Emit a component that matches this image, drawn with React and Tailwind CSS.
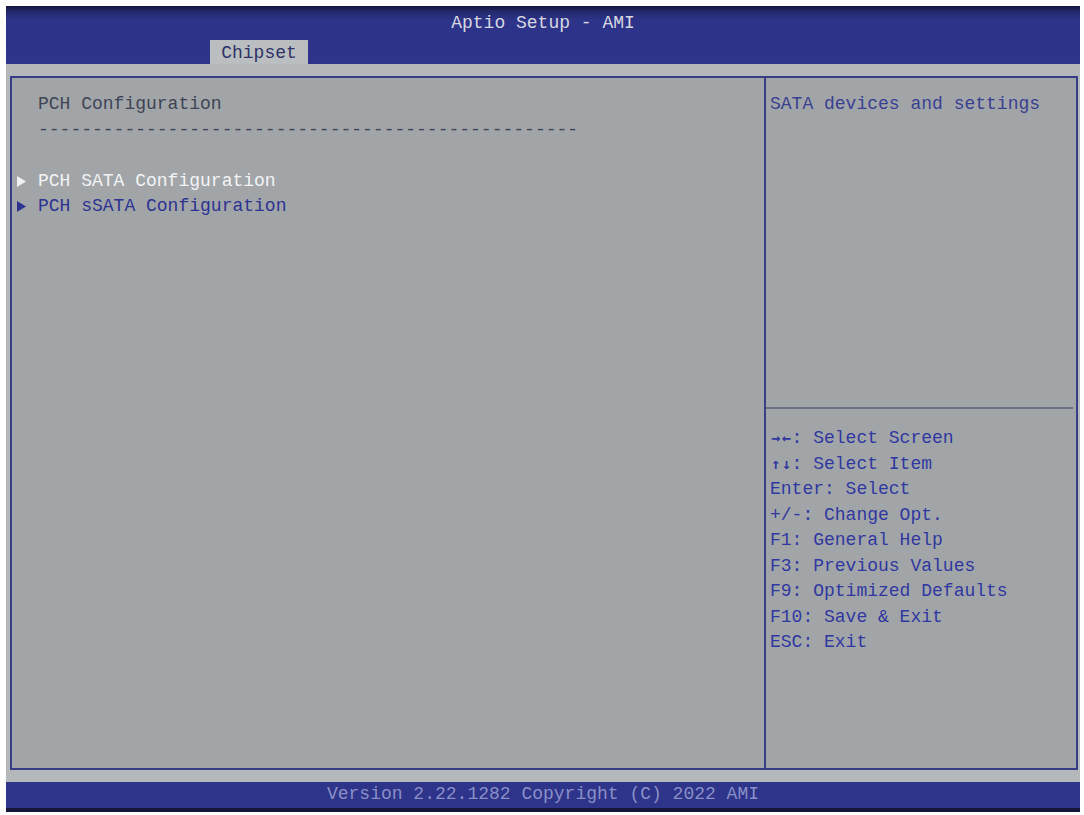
import React from 'react';

const helpLines = [
    [['\u2192', '\u2190'], ': Select Screen'],
    [['\u2191', '\u2193'], ': Select Item'],
    [null, 'Enter: Select'],
    [null, '+/-: Change Opt.'],
    [null, 'F1: General Help'],
    [null, 'F3: Previous Values'],
    [null, 'F9: Optimized Defaults'],
    [null, 'F10: Save & Exit'],
    [null, 'ESC: Exit'],
];

function Arrow({ color }) {
    return (
        <svg width="9" height="11" viewBox="0 0 9 11" className="shrink-0">
            <polygon points="0,0 9,5.5 0,11" fill={color} />
        </svg>
    );
}

function MenuItem({ label, selected }) {
    return (
        <div className="flex items-center h-[25.5px]">
            <div className="w-[26px] pl-[5px] flex items-center">
                <Arrow color={selected ? '#f2f2f4' : '#2d3391'} />
            </div>
            <span className={selected ? 'text-[#f3f3f5]' : 'text-[#2d3391]'}>{label}</span>
        </div>
    );
}

export default function App() {
    return (
        <div className="w-[1084px] h-[815px] bg-white pt-[6px] pl-[6px] pr-[4px] pb-[3px] font-['Liberation_Mono',monospace] text-[18px] leading-[25.5px]">
            <div className="flex flex-col h-full">
                {/* header */}
                <div className="h-[58px] bg-[linear-gradient(to_bottom,#14163a_0px,#242a6e_6px,#2d3388_14px,#2e3489_100%)] flex flex-col">
                    <div className="h-[30px] flex items-end justify-center text-[#d8d8e2] whitespace-pre">
                        <span className="leading-[25px]">Aptio Setup - AMI</span>
                    </div>
                    <div className="flex-1 flex items-end pl-[204px]">
                        <div className="h-[24px] w-[98px] bg-[#bbbec0] text-[#2f3368] flex items-center justify-center leading-none pt-[2px]">
                            Chipset
                        </div>
                    </div>
                </div>

                {/* body */}
                <div className="flex-1 bg-[#b5b8ba] pt-[12px] pb-[12px] pl-[4px] pr-[2px] flex">
                    <div className="flex-1 flex border-2 border-[#383d86] bg-[#a2a5a8]">
                        <div className="w-[754px] border-r-2 border-[#383d86] pt-[14px] whitespace-pre">
                            <div className="pl-[26px] text-[#404455]">PCH Configuration</div>
                            <div className="pl-[26px] text-[#404455]">{'-'.repeat(50)}</div>
                            <div className="h-[25.5px]" />
                            <MenuItem label="PCH SATA Configuration" selected />
                            <MenuItem label="PCH sSATA Configuration" />
                        </div>
                        <div className="flex-1 flex flex-col whitespace-pre">
                            <div className="h-[331px] pt-[14px] pl-[4px] pr-[4px] text-[#3a4090] relative">
                                SATA devices and settings
                                <div className="absolute left-0 right-[3px] bottom-0 h-[2px] bg-[#6d6f86]" />
                            </div>
                            <div className="pt-[17px] pl-[4px] text-[#3038a0]">
                                {helpLines.map(([keys, text], i) => (
                                    <div key={i} className="h-[25.5px] flex items-center">
                                        {keys && keys.map((k, j) => (
                                            <span key={j} className="w-[10.8px] flex justify-center font-['DejaVu_Sans_Mono',monospace] font-bold text-[15px] leading-none">{k}</span>
                                        ))}
                                        <span>{text}</span>
                                    </div>
                                ))}
                            </div>
                        </div>
                    </div>
                </div>

                {/* footer */}
                <div className="h-[30px] flex flex-col">
                    <div className="h-[26px] bg-[#2e3489] flex items-center justify-center text-[#8a8fc8] whitespace-pre">
                        Version 2.22.1282 Copyright (C) 2022 AMI
                    </div>
                    <div className="h-[4px] bg-[#14163a]" />
                </div>
            </div>
        </div>
    );
}
